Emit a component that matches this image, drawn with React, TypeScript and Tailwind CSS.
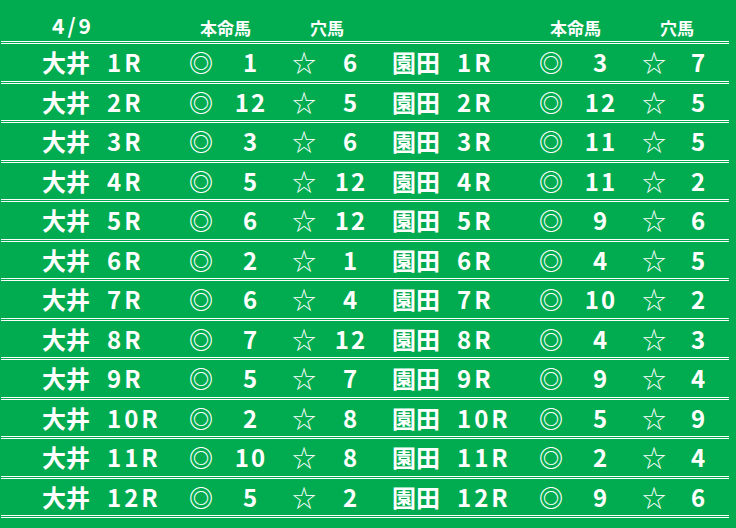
const ooi = [
  ['1R', '1', '6'],
  ['2R', '12', '5'],
  ['3R', '3', '6'],
  ['4R', '5', '12'],
  ['5R', '6', '12'],
  ['6R', '2', '1'],
  ['7R', '6', '4'],
  ['8R', '7', '12'],
  ['9R', '5', '7'],
  ['10R', '2', '8'],
  ['11R', '10', '8'],
  ['12R', '5', '2'],
];

const sonoda = [
  ['1R', '3', '7'],
  ['2R', '12', '5'],
  ['3R', '11', '5'],
  ['4R', '11', '2'],
  ['5R', '9', '6'],
  ['6R', '4', '5'],
  ['7R', '10', '2'],
  ['8R', '4', '3'],
  ['9R', '9', '4'],
  ['10R', '5', '9'],
  ['11R', '2', '4'],
  ['12R', '9', '6'],
];

export default function App() {
  return (
    <div className="w-[736px] h-[528px] bg-[#00ac4f] text-white font-['Noto_Sans_CJK_JP',sans-serif] overflow-hidden">
      <div className="ml-[1px] w-[728px]">
        {/* header */}
        <div className="h-[44px] border-b-[3px] border-double border-white grid grid-cols-[199px_110px_240px_110px_1fr] items-end pb-[5px] font-bold">
          <div className="pl-[51px] text-[21px] leading-none tracking-[3px] font-semibold">4/9</div>
          <div className="text-[17px] leading-none">本命馬</div>
          <div className="text-[17px] leading-none">穴馬</div>
          <div className="text-[17px] leading-none">本命馬</div>
          <div className="text-[17px] leading-none">穴馬</div>
        </div>

        {/* rows */}
        {ooi.map((r, i) => {
          const s = sonoda[i];
          return (
            <div
              key={r[0]}
              className="h-[39.5px] border-b-[3px] border-double border-white pl-[41px] grid grid-cols-[65px_82px_24px_76px_30px_64px_9px_65px_82px_24px_76px_30px_60px] items-center text-[24px] leading-none font-bold"
            >
              <div>大井</div>
              <div className="tracking-[3px] font-semibold">{r[0]}</div>
              <div className="text-center">◎</div>
              <div className="text-center tracking-[2px] font-semibold">{r[1]}</div>
              <div className="text-center font-normal">☆</div>
              <div className="text-center tracking-[2px] font-semibold">{r[2]}</div>
              <div />
              <div>園田</div>
              <div className="tracking-[3px] font-semibold">{s[0]}</div>
              <div className="text-center">◎</div>
              <div className="text-center tracking-[2px] font-semibold">{s[1]}</div>
              <div className="text-center font-normal">☆</div>
              <div className="text-center tracking-[2px] font-semibold">{s[2]}</div>
            </div>
          );
        })}
      </div>
    </div>
  );
}
